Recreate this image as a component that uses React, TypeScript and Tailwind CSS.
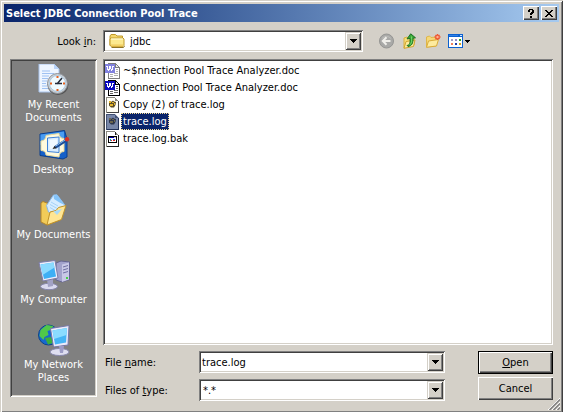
import { useState } from "react";
import type { ReactNode } from "react";

const sunken =
  "bg-white p-[2px] shadow-[inset_1px_1px_#808080,inset_-1px_-1px_#fff,inset_2px_2px_#404040,inset_-2px_-2px_#d4d0c8]";
const raised =
  "bg-[#d4d0c8] shadow-[inset_1px_1px_#fff,inset_-1px_-1px_#404040,inset_-2px_-2px_#808080]";
const arrowBox =
  "flex w-4 shrink-0 items-center justify-center bg-[#d4d0c8] shadow-[inset_1px_1px_#d4d0c8,inset_-1px_-1px_#404040,inset_2px_2px_#fff,inset_-2px_-2px_#808080]";

function Arrow() {
  return (
    <svg width="7" height="4" viewBox="0 0 7 4" shapeRendering="crispEdges" aria-hidden="true">
      <path d="M0 0h7v1h-1v1h-1v1h-1v1h-1v-1h-1v-1h-1v-1h-1z" fill="#000" />
    </svg>
  );
}

function FolderIcon() {
  return (
    <svg width="16" height="16" viewBox="0 0 16 16" aria-hidden="true">
      <path d="M1 12.5V3L2 1.500h4.500L8 3h5.500v3" fill="#f5d76c" stroke="#c09a2c" />
      <path d="M2 13.500 1 12V6l1-1h12l1 1v6.500l-1 1z" fill="#fce98f" stroke="#c09a2c" />
      <path d="M2 6h12" stroke="#fffde0" />
      <path d="M2 12h12M2 13h12" stroke="#eec85a" />
      <path d="M2.500 14.500h12l1-1.500" fill="none" stroke="#8e7226" />
    </svg>
  );
}

function BackIcon() {
  return (
    <svg width="16" height="16" viewBox="0 0 16 16" aria-hidden="true">
      <circle cx="7.500" cy="8" r="7" fill="#a9a9a7" stroke="#959593" />
      <path d="M3 5.500A6 6 0 0 1 12 5.500" fill="none" stroke="#bdbdba" />
      <path d="M7.500 4.200 3.800 8l3.700 3.800M4.500 8h7" fill="none" stroke="#f0efea" strokeWidth="2" />
    </svg>
  );
}

function UpIcon() {
  return (
    <svg width="16" height="16" viewBox="0 0 16 16" aria-hidden="true">
      <path d="M2 15V5l3-1 1.500 1.500H12V12z" fill="#f7dd7a" stroke="#d9b13e" />
      <path d="M2 15.300 4 8.500l9-1.500-1.500 6.500z" fill="#fdec9e" stroke="#d0a42f" />
      <path d="M5 12.500c2.500-.5 3.300-2 3-7l-3 .4L8.700.8 13.500 4.800l-2.500.4c.4 5-1.500 8-5 8.300z" fill="#3aa83a" stroke="#176b1f" strokeWidth=".9" />
      <path d="M9.500 3.500c.5 4 .2 6.500-1.500 8.200" fill="none" stroke="#7bdc6c" />
    </svg>
  );
}

function NewFolderIcon() {
  return (
    <svg width="16" height="16" viewBox="0 0 16 16" aria-hidden="true">
      <path d="M1.500 14V4l3-1 1.500 1.500L11 4v9z" fill="#f5d878" stroke="#e0b648" />
      <path d="M1.500 14.300 3.500 8l10-1.500-2 6.500z" fill="#fdeb9f" stroke="#d9ab38" />
      <path d="M12.500 1v6M9.500 4h6M10.500 2l4 4M14.500 2l-4 4" stroke="#ee5532" strokeWidth="1.400" />
      <circle cx="12.500" cy="4" r="1.200" fill="#ffb090" />
    </svg>
  );
}

function ViewsIcon() {
  return (
    <svg width="22" height="16" viewBox="0 0 22 16" shapeRendering="crispEdges" aria-hidden="true">
      <rect x="0" y="1" width="15" height="14" fill="#0c61cf" />
      <rect x="1" y="4" width="13" height="10" fill="#fff" />
      <path d="M1 2h9v1H1z" fill="#2f80e8" />
      <path d="M12 2h2v1h-2z" fill="#c7e0ff" />
      <path d="M3 6h2v2H3z" fill="#a09cc8" />
      <path d="M7 6h2v2H7z" fill="#9489c8" />
      <path d="M11 6h2v2h-2z" fill="#28a428" />
      <path d="M3 10h2v2H3z" fill="#f0805a" />
      <path d="M7 10h2v2H7z" fill="#1d3fa5" />
      <path d="M11 10h2v2h-2z" fill="#d8a21c" />
      <path d="M17 7h5v1h-1v1h-1v1h-1v-1h-1v-1h-1z" fill="#000" />
    </svg>
  );
}

function WordIcon({ faded = false }: { faded?: boolean }) {
  return (
    <svg width="16" height="16" viewBox="0 0 16 16" shapeRendering="crispEdges" aria-hidden="true" opacity={faded ? 0.5 : 1}>
      <path d="M3 0h8v1h1v1h1v1h1v1h1v12H3z" fill="#000" />
      <path d="M4 1h6v4h4v10H4z" fill="#fff" />
      <path d="M11 2h1v1h1v1h-2z" fill="#ddd" />
      <path d="M11 6h2v1h-2zM11 8h2v1h-2zM5 11h3v1H5zM9 10h4v1H9zM9 12h4v1H9zM5 13h3v1H5z" fill="#666" />
      <rect x="0" y="1" width="10" height="9" fill="#0808c0" />
      <path d="M1 3h2v3h1V3h2v3h1V3h2v1H8v3H7v1H6V6H5v1H4v1H3V7H2V4H1z" fill="#fff" />
    </svg>
  );
}

function LogIcon({ selected = false }: { selected?: boolean }) {
  return (
    <svg width="16" height="16" viewBox="0 0 16 16" aria-hidden="true">
      <g shapeRendering="crispEdges">
        <path d="M1 0h9v1h1v1h1v1h1v1h1v12H1z" fill="#8b897f" />
        <path d="M2 1h8v3h3v11H2z" fill="#fffef4" />
        <path d="M13 4h1v12H2v-1h11z" fill="#444" />
      </g>
      <path d="M4 5 5 4l1.500.8L8 3.500 9 4.500l2 .5-.5 3L9 10.500H6L4 8.500z" fill="#5a4c24" />
      <path d="M4 4h2v2H4zM7 5h2v1H7zM9 6h1v2H9zM5 7h3v2H5z" fill="#e2b42b" />
      {selected && <path d="M1 0h9l4 4v12H1z" fill="#0a246a" opacity=".55" />}
    </svg>
  );
}

function BakIcon() {
  return (
    <svg width="16" height="16" viewBox="0 0 16 16" shapeRendering="crispEdges" aria-hidden="true">
      <path d="M1 0h9v1h1v1h1v1h1v1h1v12H1z" fill="#8b897f" />
      <path d="M2 1h8v3h3v11H2z" fill="#fff" />
      <path d="M13 4h1v12H2v-1h11zM10 1h1v3h-1z" fill="#222" />
      <path d="M3 5h9v7H3z" fill="#000" />
      <path d="M4 7h7v4H4z" fill="#fff" />
      <path d="M4 6h5v1H4z" fill="#0000a0" />
      <path d="M9 6h2v1H9z" fill="#d0d0d0" />
      <path d="M5 8h1v2H5z" fill="#00a0a0" />
      <path d="M6 9h1v1H6z" fill="#e02020" />
      <path d="M8 8h2v1H8z" fill="#3040e0" />
      <path d="M8 9h2v1H8z" fill="#e02020" />
    </svg>
  );
}

function RecentIcon() {
  return (
    <svg width="32" height="32" viewBox="0 0 32 32" aria-hidden="true">
      <path d="M1 0h15l5 5v23H1z" fill="#eef5ff" stroke="#a9c4ec" />
      <path d="M16 0v5h5z" fill="#b9d3f8" />
      <path d="M4 7h8M4 9.500h12M4 12h7M4 14.500h6M4 17h5M4 19.500h4M4 22h5M4 24.500h6" stroke="#9fc1f2" />
      <circle cx="20" cy="20.500" r="10.500" fill="#555" />
      <circle cx="19.500" cy="19.500" r="10" fill="#ccd0d4" stroke="#8d9299" />
      <circle cx="19.500" cy="19.500" r="8" fill="#f0faff" stroke="#a9c6df" />
      <path d="M19.500 12v2M19.500 25v2M12 19.500h2M25 19.500h2" stroke="#e8601c" strokeWidth="2" />
      <path d="M24 14 19 20M17 19.500h7" stroke="#252b3a" strokeWidth="1.500" />
    </svg>
  );
}

function DesktopIcon() {
  return (
    <svg width="32" height="32" viewBox="0 0 32 32" aria-hidden="true">
      <path d="M2 5 26.500 1.500 29 10v18l-4 2L2 26.500z" fill="#1560c8" stroke="#0b3f8c" />
      <path d="M2.500 5.500 26 2.500v11L2.500 16z" fill="#4a9df2" />
      <path d="M8 6.500 21 4.500c0 3 2 5 5 5v13c-3 0-5 2-5 5.500L8 26c0-3-2-4.500-5-4.500V12c3 0 5-2.500 5-5.500z" fill="#fffade" stroke="#eadb9c" />
      <path d="M9.500 9 21 8v15.500L9.500 22.500z" fill="#d9edff" stroke="#3f83d8" />
      <path d="M11.500 11 19 10v10l-7.500 0z" fill="#fff" opacity=".6" />
      <path d="M17 18.500 28.500 11" stroke="#1e4c94" strokeWidth="3" />
      <path d="M17.500 17.200 27.500 10.700" stroke="#8ac0f5" />
      <path d="M14.500 20 16.500 17l2 2.200z" fill="#222" />
      <circle cx="29" cy="10.300" r="2.200" fill="#d83224" />
    </svg>
  );
}

function DocumentsIcon() {
  return (
    <svg width="32" height="32" viewBox="0 0 32 32" aria-hidden="true">
      <path d="M3 28V9l2-1.500 5 2 2 3.500 10-3v16L9 31z" fill="#f2cb58" stroke="#b3852a" />
      <path d="M8.500 11.500 15.500 1 19 .8 27.500 12l-8 11-9-5z" fill="#d6ecff" stroke="#86b9ec" />
      <path d="M15.500 1.500 19 1l7.500 10-5-2.500L16 5z" fill="#84c4fa" />
      <path d="M13 8l7 4M12 10.500l8 4.500M12 13.500l7 4" stroke="#a5d2f8" />
      <path d="M9 31 12 18l6-1.500 2.500-3 7.500-2-4.500 14z" fill="#ffe694" stroke="#c09229" />
      <path d="M15.500 17.500 24 15l-5 6z" fill="#a9daf8" />
    </svg>
  );
}

function ComputerIcon() {
  return (
    <svg width="32" height="32" viewBox="0 0 32 32" aria-hidden="true">
      <path d="M18 4l5-2 8.500 1v17.500L24 23l-6-2z" fill="#a2a2cc" stroke="#656591" />
      <path d="M24 5.500l7-2v17l-7 2.500z" fill="#c8c8e6" />
      <path d="M25 8l5-1.500M25 11l5-1.500M25 14l5-1.500" stroke="#6f6fa2" />
      <path d="M28 18h2v2h-2z" fill="#45cf45" />
      <ellipse cx="11" cy="27.500" rx="8.500" ry="3.200" fill="#d9d9ee" stroke="#8585aa" />
      <path d="M9 20l6-1v8l-5 1z" fill="#a1a1c4" />
      <path d="M1 3.500 17 1.500l3 17.500-15 3z" fill="#eeeefc" stroke="#7d7da9" />
      <path d="M2.500 5.500 15.500 3.500 18 17.500 6 20z" fill="#3eaff5" />
      <path d="M2.500 5.500 15.500 3.500l1 5L4.500 16z" fill="#8bdaff" />
    </svg>
  );
}

function NetworkIcon() {
  return (
    <svg width="32" height="32" viewBox="0 0 32 32" aria-hidden="true">
      <circle cx="10.500" cy="11" r="10" fill="#1668cf" stroke="#0b438c" />
      <path d="M2.500 6l6-5 7 1-3 4-3 1 1 4-4 2-1 3-4-4z" fill="#50c849" />
      <path d="M7 14l6-1 2 6-5 1.500z" fill="#3cae3b" />
      <path d="M12.500 4.500 31 1.500l-1 19.500-14.500 2z" fill="#eaeafa" stroke="#7777a5" />
      <path d="M14.500 6.500 29 4 28 18.500 17 20.500z" fill="#46b5f5" />
      <path d="M14.500 6.500 29 4l-.5 7-12.500 4z" fill="#8bdcff" />
      <ellipse cx="21.500" cy="28" rx="9.500" ry="3.500" fill="#dedef0" stroke="#8888ad" />
      <path d="M21 22h5l-1 7h-3z" fill="#9c9cc6" />
    </svg>
  );
}

const places: { name: ReactNode; icon: ReactNode }[] = [
  { name: <>My Recent<br />Documents</>, icon: <RecentIcon /> },
  { name: "Desktop", icon: <DesktopIcon /> },
  { name: "My Documents", icon: <DocumentsIcon /> },
  { name: "My Computer", icon: <ComputerIcon /> },
  { name: <>My Network<br />Places</>, icon: <NetworkIcon /> },
];

const files = [
  { name: "~$nnection Pool Trace Analyzer.doc", kind: "lock" },
  { name: "Connection Pool Trace Analyzer.doc", kind: "word" },
  { name: "Copy (2) of trace.log", kind: "log" },
  { name: "trace.log", kind: "log" },
  { name: "trace.log.bak", kind: "bak" },
];

function FileIcon({ kind, selected }: { kind: string; selected: boolean }) {
  if (kind === "lock") return <WordIcon faded />;
  if (kind === "word") return <WordIcon />;
  if (kind === "bak") return <BakIcon />;
  return <LogIcon selected={selected} />;
}

export default function App() {
  const [selected, setSelected] = useState("trace.log");
  const [fileName, setFileName] = useState("trace.log");

  const pick = (name: string) => {
    setSelected(name);
    setFileName(name);
  };

  return (
    <div className="relative w-full bg-[#d4d0c8] p-1 pb-3 font-['DejaVu_Sans_Condensed','DejaVu_Sans',sans-serif] text-[11px] leading-[13px] text-black shadow-[inset_1px_1px_#d4d0c8,inset_-1px_-1px_#404040,inset_2px_2px_#fff,inset_-2px_-2px_#808080]">
      <header className="flex h-[18px] items-center gap-[2px] bg-linear-to-r from-[#0a246a] to-[#a6caf0] px-[2px]">
        <h1 className="min-w-0 flex-1 truncate font-bold text-white">Select JDBC Connection Pool Trace</h1>
        <button type="button" aria-label="Help" className={`flex h-[14px] w-4 items-center justify-center ${raised}`}>
          <svg width="6" height="9" viewBox="0 0 6 9" shapeRendering="crispEdges" aria-hidden="true">
            <path d="M1 0h4v1h1v3h-1v1h-1v1h-2v-2h1v-1h1v-2h-2v2h-2v-2h1zM2 7h2v2h-2z" fill="#000" />
          </svg>
        </button>
        <button type="button" aria-label="Close" className={`flex h-[14px] w-4 items-center justify-center ${raised}`}>
          <svg width="8" height="7" viewBox="0 0 8 7" shapeRendering="crispEdges" aria-hidden="true">
            <path d="M0 0h2v1h1v1h2v-1h1v-1h2v1h-1v1h-1v1h-1v1h1v1h1v1h1v1h-2v-1h-1v-1h-2v1h-1v1h-2v-1h1v-1h1v-1h1v-1h-1v-1h-1v-1h-1z" fill="#000" />
          </svg>
        </button>
      </header>

      <div className="flex items-center pt-2 pl-[6px]">
        <label htmlFor="look-in" className="w-[93px] shrink-0 pr-[7px] text-right">
          Look <u>i</u>n:
        </label>
        <div className={`flex h-[22px] max-w-[260px] flex-1 items-stretch ${sunken}`}>
          <span className="flex w-5 shrink-0 items-center justify-end">
            <FolderIcon />
          </span>
          <select id="look-in" className="min-w-0 flex-1 appearance-none bg-white pl-[5px] outline-none">
            <option>jdbc</option>
          </select>
          <span className={`pointer-events-none ${arrowBox}`}>
            <Arrow />
          </span>
        </div>
        <div className="flex items-center gap-[7px] pl-4" role="toolbar" aria-label="Navigation">
          <button type="button" aria-label="Back" disabled><BackIcon /></button>
          <button type="button" aria-label="Up one level"><UpIcon /></button>
          <button type="button" aria-label="New folder"><NewFolderIcon /></button>
          <button type="button" aria-label="Views"><ViewsIcon /></button>
        </div>
      </div>

      <main className="flex gap-[6px] px-[6px] pt-[7px]">
        <nav aria-label="Places" className="mb-1 w-[87px] shrink-0 bg-[#808080] p-[2px] pt-[5px] shadow-[inset_1px_1px_#808080,inset_-1px_-1px_#fff,inset_2px_2px_#404040,inset_-2px_-2px_#d4d0c8]">
          <ul>
            {places.map((place, i) => (
              <li key={i} className="h-[65px]">
                <button type="button" className="flex w-full flex-col items-center gap-[2px] text-center whitespace-nowrap text-white">
                  {place.icon}
                  <span>{place.name}</span>
                </button>
              </li>
            ))}
          </ul>
        </nav>

        <div className="flex min-w-0 flex-1 flex-col gap-[6px]">
          <ul aria-label="Files" className={`h-[286px] pt-[3px] ${sunken}`}>
            {files.map((file) => {
              const active = file.name === selected;
              return (
                <li key={file.name}>
                  <button type="button" onClick={() => pick(file.name)} className="flex h-[17px] items-center">
                    <FileIcon kind={file.kind} selected={active} />
                    <span
                      className={
                        active
                          ? "border border-dotted border-[#f5db95] bg-[#0a246a] p-[1px] text-white"
                          : "border border-transparent p-[1px]"
                      }
                    >
                      {file.name}
                    </span>
                  </button>
                </li>
              );
            })}
          </ul>

          <form className="flex justify-between" onSubmit={(e) => e.preventDefault()}>
            <div className="flex max-w-[342px] flex-1 flex-col gap-[6px]">
              <div className="flex items-center">
                <label htmlFor="file-name" className="w-24 shrink-0 pl-[2px]">
                  File <u>n</u>ame:
                </label>
                <div className={`flex h-[22px] min-w-0 flex-1 ${sunken}`}>
                  <input
                    id="file-name"
                    value={fileName}
                    onChange={(e) => setFileName(e.target.value)}
                    className="min-w-0 flex-1 bg-white pl-[1px] outline-none"
                  />
                  <button type="button" aria-label="Recent file names" className={arrowBox}>
                    <Arrow />
                  </button>
                </div>
              </div>
              <div className="flex items-center">
                <label htmlFor="file-type" className="w-24 shrink-0 pl-[2px]">
                  Files of <u>t</u>ype:
                </label>
                <div className={`flex h-[22px] min-w-0 flex-1 ${sunken}`}>
                  <select id="file-type" className="min-w-0 flex-1 appearance-none bg-white pl-[2px] outline-none">
                    <option>*.*</option>
                  </select>
                  <span className={`pointer-events-none ${arrowBox}`}>
                    <Arrow />
                  </span>
                </div>
              </div>
            </div>
            <div className="flex w-[75px] flex-col gap-[3px]">
              <button type="submit" className={`h-[23px] border border-black ${raised}`}>
                <u>O</u>pen
              </button>
              <button type="button" className={`h-[23px] ${raised}`}>
                Cancel
              </button>
            </div>
          </form>
        </div>
      </main>

      <svg className="absolute right-[3px] bottom-[3px]" width="12" height="12" viewBox="0 0 12 12" aria-hidden="true">
        <path d="M0 12 12 0M4 12 12 4M8 12 12 8" stroke="#fff" />
        <path d="M1.500 12 12 1.500M5.500 12 12 5.500M9.500 12 12 9.500" stroke="#808080" strokeWidth="1.500" />
      </svg>
    </div>
  );
}
